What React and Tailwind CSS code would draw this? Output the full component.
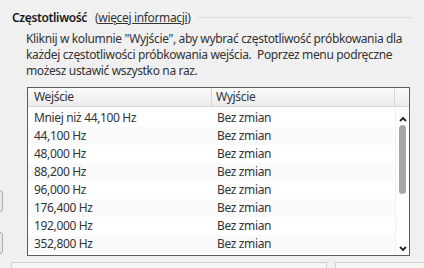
import React from "react";

const rows = [
  "Mniej niż 44,100 Hz",
  "44,100 Hz",
  "48,000 Hz",
  "88,200 Hz",
  "96,000 Hz",
  "176,400 Hz",
  "192,000 Hz",
  "352,800 Hz",
];

function Chevron({ up }) {
  return (
    <svg width="8" height="6" viewBox="0 0 8 6">
      <path
        d={up ? "M1 5 L4 2 L7 5" : "M1 1 L4 4 L7 1"}
        fill="none"
        stroke="#222"
        strokeWidth="1.8"
      />
    </svg>
  );
}

export default function App() {
  return (
    <div
      className="relative w-[424px] h-[268px] overflow-hidden bg-[#f0f0f0] text-[12px] text-[#333] tracking-[-0.35px] whitespace-nowrap"
      style={{ fontFamily: '"Noto Sans", "Open Sans", sans-serif' }}
    >
      <div className="flex items-center pl-[12px] pr-[12px] pt-[10px] h-[25px]">
        <span className="font-semibold text-[#1a1a1a]">Częstotliwość</span>
        <span className="ml-[8px] text-[#333]">
          (<span className="underline">więcej informacji</span>)
        </span>
        <div className="flex-1 ml-[8px] border-t border-[#dcdcdc]" />
      </div>
      <div className="pl-[26px] pr-[10px] pt-[6px] leading-[16px]">
        <p>Kliknij w kolumnie "Wyjście", aby wybrać częstotliwość próbkowania dla</p>
        <p>każdej częstotliwości próbkowania wejścia.&nbsp; Poprzez menu podręczne</p>
        <p>możesz ustawić wszystko na raz.</p>
      </div>
      <div className="ml-[27px] mt-[8px] w-[383px] h-[169px] border border-[#5c5c5c] bg-white flex flex-col">
        <div className="flex h-[19px] shrink-0 border-b border-[#d6d6d6] bg-gradient-to-b from-[#fbfbfb] to-[#ebebeb]">
          <div className="w-[184px] pl-[6px] flex items-center border-r border-[#d6d6d6]">Wejście</div>
          <div className="w-[183px] pl-[4px] flex items-center border-r border-[#d6d6d6]">Wyjście</div>
          <div className="flex-1" />
        </div>
        <div className="flex flex-1 min-h-0">
          <div className="w-[367px] flex flex-col pt-[2px]">
            {rows.map((r, i) => (
              <div
                key={r}
                className={`flex h-[18px] shrink-0 items-center ${i % 2 === 1 ? "bg-[#fafafa]" : "bg-white"}`}
              >
                <div className="w-[184px] pl-[6px]">{r}</div>
                <div className="pl-[5px]">Bez zmian</div>
              </div>
            ))}
          </div>
          <div className="flex-1 flex flex-col items-center bg-[#fdfdfd] border-l border-[#f0f0f0]">
            <div className="h-[13px] flex items-center justify-center mt-[5px]">
              <Chevron up />
            </div>
            <div className="w-[7px] h-[69px] rounded-full bg-[#a6a6a6]" />
            <div className="flex-1" />
            <div className="h-[13px] flex items-center justify-center">
              <Chevron />
            </div>
          </div>
        </div>
      </div>
      {/* cut-off controls on the left edge */}
      <div className="absolute left-[-20px] top-[190px] w-[23px] h-[22px] rounded-[3px] border border-[#adadad] bg-[#e8e8e8]" />
      <div className="absolute left-[-20px] top-[232px] w-[23px] h-[22px] rounded-[3px] border border-[#adadad] bg-[#e8e8e8]" />
      {/* cut-off controls at the bottom */}
      <div className="absolute left-[11px] top-[262px] w-[316px] h-[20px] border border-[#d0d0d0] bg-[#f6f6f6]" />
      <div className="absolute left-[335px] top-[262px] w-[100px] h-[20px] border border-[#d0d0d0] bg-[#f6f6f6]" />
    </div>
  );
}
